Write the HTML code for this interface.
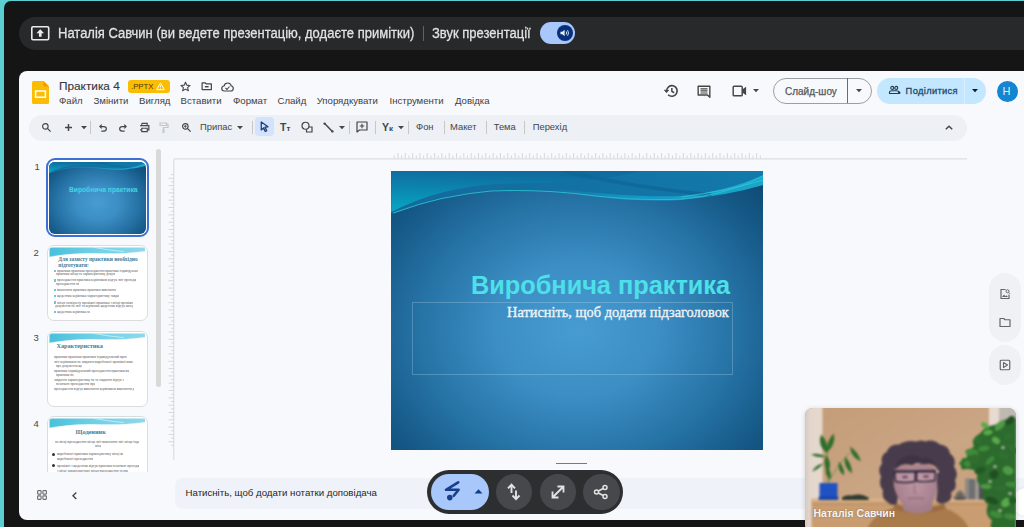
<!DOCTYPE html>
<html><head><meta charset="utf-8">
<style>
*{margin:0;padding:0;box-sizing:border-box}
html,body{width:1024px;height:527px;overflow:hidden;background:#5ccdd0;font-family:"Liberation Sans",sans-serif}
.abs{position:absolute}
#dark{position:absolute;left:4px;top:1px;width:1020px;height:526px;background:#151515;border-top-left-radius:7px;overflow:hidden}
#bar{position:absolute;left:19px;top:17px;width:1005px;height:33px;background:#28292b;border-radius:17px 0 0 17px}
.bt{position:absolute;color:#e3e3e3;font-size:13px;-webkit-text-stroke:0.25px #e3e3e3;transform:scaleY(1.1);transform-origin:0 0;white-space:nowrap;letter-spacing:0}
#panel{position:absolute;left:19px;top:71px;width:1005px;height:449px;background:#f8f9fd;border-radius:8px 0 0 8px;overflow:hidden}
.t{position:absolute;white-space:nowrap;color:#1f1f1f}
.menu{position:absolute;top:95px;font-size:9.6px;color:#3c3d40;white-space:nowrap}
#toolbar{position:absolute;left:29px;top:114.5px;width:938px;height:26px;background:#edf0f5;border-radius:13px}
.sep{position:absolute;width:1px;background:#c7c7c7}
.tbt{position:absolute;top:121.3px;font-size:9.4px;color:#444746;white-space:nowrap}
svg{position:absolute;overflow:visible}
</style></head><body>
<div id="dark"></div>
<div id="bar"></div>
<!-- present icon -->
<svg style="left:30.5px;top:26px" width="18.5" height="14.5" viewBox="0 0 18.5 14.5"><rect x="0.8" y="0.8" width="16.9" height="12.9" fill="none" stroke="#ececec" stroke-width="1.6" rx="1.2"/><path d="M9.25 3.3 L13.1 7.2 H10.6 V10.8 H7.9 V7.2 H5.4 Z" fill="#ececec"/></svg>
<div class="bt" id="t_present" style="left:58px;top:24.6px">Наталія Савчин (ви ведете презентацію, додаєте примітки)</div>
<div class="abs" style="left:423px;top:26px;width:1px;height:15px;background:#5f6368"></div>
<div class="bt" id="t_sound" style="left:432px;top:24.6px">Звук презентації</div>
<div class="abs" style="left:540px;top:22px;width:35.2px;height:22.2px;border-radius:11.1px;background:#a8c7fa"></div>
<div class="abs" style="left:556.5px;top:25.1px;width:16px;height:16px;border-radius:8px;background:#06307a"></div>
<svg style="left:559.5px;top:29px" width="10" height="8" viewBox="0 0 10 8"><path d="M0.5 2.8 H2.3 L4.6 0.8 V7.2 L2.3 5.2 H0.5Z" fill="#e8f0fe"/><path d="M6.2 2.5 Q7.2 4 6.2 5.5 M7.6 1.2 Q9.4 4 7.6 6.8" fill="none" stroke="#e8f0fe" stroke-width="0.9"/></svg>

<div id="panel"></div>

<!-- header -->
<svg style="left:32px;top:81px" width="17" height="23" viewBox="0 0 17 23"><path d="M1.5 0 H11.5 L17 5.5 V21.5 Q17 23 15.5 23 H1.5 Q0 23 0 21.5 V1.5 Q0 0 1.5 0Z" fill="#fbbc04"/><path d="M11.5 0 L17 5.5 H12.5 Q11.5 5.5 11.5 4.5Z" fill="#f29900"/><rect x="3.6" y="10" width="9.8" height="6.2" fill="none" stroke="#fff" stroke-width="1.5"/></svg>
<div class="t" id="t_title" style="left:59px;top:79px;font-size:11.8px;color:#3a3b3d;-webkit-text-stroke:0.15px #3a3b3d">Практика 4</div>
<div class="abs" style="left:128px;top:80px;width:42px;height:13px;background:#fbbc04;border-radius:3px"></div>
<div class="t" id="t_pptx" style="left:131px;top:82px;font-size:7.8px;color:#4a3900">.PPTX</div>
<svg style="left:156px;top:82px" width="9" height="8.5" viewBox="0 0 10 9"><path d="M5 0.8 L9.3 8.3 H0.7Z" fill="none" stroke="#fff" stroke-width="1.1" stroke-linejoin="round"/><path d="M5 3.2 V5.6 M5 6.6 V7.2" stroke="#fff" stroke-width="1"/></svg>
<svg style="left:180px;top:81px" width="11" height="11" viewBox="0 0 24 24"><path d="M12 2.5 L14.9 9.1 L22 9.7 L16.6 14.4 L18.2 21.4 L12 17.7 L5.8 21.4 L7.4 14.4 L2 9.7 L9.1 9.1Z" fill="none" stroke="#444746" stroke-width="2.4" stroke-linejoin="round"/></svg>
<svg style="left:200.5px;top:82px" width="11.5" height="8.5" viewBox="0 0 24 18"><path d="M2.2 2 H9 L11 4 H21.8 V16 H2.2Z" fill="none" stroke="#444746" stroke-width="2.6" stroke-linejoin="round"/><path d="M8 10 H16" stroke="#444746" stroke-width="3"/></svg>
<svg style="left:221px;top:82px" width="13" height="10" viewBox="0 0 26 20"><path d="M6.5 18 Q1.5 18 1.5 13 Q1.5 8.5 6 8 Q7.5 2 13.5 2 Q19.5 2 20.5 8 Q24.5 8.5 24.5 13 Q24.5 18 19.5 18Z" fill="none" stroke="#444746" stroke-width="2.4"/><path d="M9 12 L12 15 L17 9" fill="none" stroke="#444746" stroke-width="2.2"/></svg>
<div class="menu" id="m1" style="left:59px">Файл</div>
<div class="menu" id="m2" style="left:93.5px">Змінити</div>
<div class="menu" id="m3" style="left:139px">Вигляд</div>
<div class="menu" id="m4" style="left:180.6px">Вставити</div>
<div class="menu" id="m5" style="left:233px">Формат</div>
<div class="menu" id="m6" style="left:277.5px">Слайд</div>
<div class="menu" id="m7" style="left:316.7px">Упорядкувати</div>
<div class="menu" id="m8" style="left:389.5px">Інструменти</div>
<div class="menu" id="m9" style="left:455px">Довідка</div>

<!-- header right -->
<svg style="left:663.5px;top:84px" width="14.5" height="14" viewBox="0 0 24 23"><path d="M4.2 11.5 A8.8 8.8 0 1 1 6.8 17.7" fill="none" stroke="#444746" stroke-width="2.7"/><path d="M0.6 10.2 L4.2 14.2 L7.8 10.2Z" fill="#444746" stroke="#444746" stroke-width="1.2" stroke-linejoin="round"/><path d="M13 6.5 V12 L16.8 14.4" fill="none" stroke="#444746" stroke-width="2.5"/></svg>
<svg style="left:697px;top:84.5px" width="14" height="13" viewBox="0 0 24 22"><path d="M2 2 H22 V21 L18 17 H2Z" fill="none" stroke="#444746" stroke-width="2.4" stroke-linejoin="round"/><path d="M6 6.5 H18 M6 10 H18 M6 13.5 H18" stroke="#444746" stroke-width="2"/></svg>
<svg style="left:732px;top:85px" width="15" height="12" viewBox="0 0 25 20"><path d="M2 3.5 Q2 2 3.5 2 H15.5 Q17 2 17 3.5 V16.5 Q17 18 15.5 18 H3.5 Q2 18 2 16.5Z" fill="none" stroke="#444746" stroke-width="2.4"/><path d="M17 7.5 L23.5 3 V17 L17 12.5Z" fill="#444746"/></svg>
<svg style="left:753px;top:89px" width="6" height="4" viewBox="0 0 6 4"><path d="M0 0 H6 L3 3.2Z" fill="#444746"/></svg>
<div class="abs" style="left:773px;top:77.5px;width:99px;height:26px;border:1.2px solid #9b9ea2;border-radius:13px"></div>
<div class="abs" style="left:847px;top:78px;width:1.2px;height:25px;background:#6a6d70"></div>
<div class="t" id="t_slideshow" style="left:785px;top:85.5px;font-size:10px;color:#555759;-webkit-text-stroke:0.25px #555759">Слайд-шоу</div>
<svg style="left:856px;top:89px" width="6" height="4" viewBox="0 0 6 4"><path d="M0 0 H6 L3 3.2Z" fill="#444746"/></svg>
<div class="abs" style="left:877px;top:77.5px;width:109px;height:26.5px;background:#c2e7ff;border-radius:13.5px"></div>
<div class="abs" style="left:964px;top:77.5px;width:1px;height:26.5px;background:#d9effd"></div>
<svg style="left:888.5px;top:86px" width="11.5" height="8" viewBox="0 0 23 16"><circle cx="6.5" cy="3.8" r="3" fill="none" stroke="#1d3a50" stroke-width="2.2"/><circle cx="14.5" cy="3.8" r="3" fill="none" stroke="#1d3a50" stroke-width="2.2"/><path d="M1 15 V12.5 Q1 9.5 6.5 9.5 H14 Q20 9.5 20 12.5 V15Z" fill="none" stroke="#1d3a50" stroke-width="2.2"/><circle cx="20.5" cy="13.5" r="2.4" fill="#1d3a50"/></svg>
<div class="t" id="t_share" style="left:905.6px;top:86px;font-size:9.3px;letter-spacing:0.35px;color:#1d4a6c;-webkit-text-stroke:0.3px #1d4a6c">Поділитися</div>
<svg style="left:972px;top:89px" width="6" height="4" viewBox="0 0 6 4"><path d="M0 0 H6 L3 3.2Z" fill="#001d35"/></svg>
<div class="abs" style="left:996.5px;top:80.5px;width:21px;height:21px;border-radius:50%;background:#1485d0"></div>
<div class="t" id="t_h" style="left:1002.5px;top:85px;font-size:11px;color:#dcefff">H</div>

<!-- toolbar -->
<div id="toolbar"></div>
<svg style="left:41px;top:122px" width="11" height="11" viewBox="0 0 24 24"><circle cx="9.5" cy="9.5" r="6" fill="none" stroke="#444746" stroke-width="2.6"/><path d="M14 14 L21 21" stroke="#444746" stroke-width="2.8"/></svg>
<svg style="left:65.3px;top:124px" width="7" height="7" viewBox="0 0 7 7"><path d="M3.5 0 V7 M0 3.5 H7" stroke="#444746" stroke-width="1.5"/></svg>
<svg style="left:80.5px;top:126px" width="6" height="4" viewBox="0 0 6 4"><path d="M0 0 H6 L3 3.2Z" fill="#444746"/></svg>
<div class="sep" style="left:89.5px;top:121px;height:13px"></div>
<svg style="left:97.5px;top:122.5px" width="10" height="10" viewBox="0 0 24 24"><path d="M9 4 L4.5 8.5 L9 13" fill="none" stroke="#444746" stroke-width="2.8"/><path d="M5 8.5 H14 Q20 8.5 20 14 Q20 19.5 14 19.5 H8" fill="none" stroke="#444746" stroke-width="2.8"/></svg>
<svg style="left:118px;top:122.5px" width="10" height="10" viewBox="0 0 24 24"><path d="M15 4 L19.5 8.5 L15 13" fill="none" stroke="#444746" stroke-width="2.8"/><path d="M19 8.5 H10 Q4 8.5 4 14 Q4 19.5 10 19.5 H16" fill="none" stroke="#444746" stroke-width="2.8"/></svg>
<svg style="left:138.5px;top:122px" width="11" height="11" viewBox="0 0 24 24"><path d="M6 3 H18 V8 M6 8 V3" fill="none" stroke="#444746" stroke-width="2.4"/><path d="M2.5 8 H21.5 V17 H18 M6 17 H2.5Z" fill="none" stroke="#444746" stroke-width="2.6"/><path d="M6 13.5 H18 V21 H6Z" fill="none" stroke="#444746" stroke-width="2.4"/></svg>
<svg style="left:159px;top:121.5px" width="10" height="12" viewBox="0 0 20 24"><path d="M2 2 H15 V7 H2Z M15 4.5 H18 V11 H9 V14" fill="none" stroke="#c4c7c5" stroke-width="2.4"/><rect x="7" y="14" width="4" height="8" fill="#c4c7c5"/></svg>
<svg style="left:180.5px;top:122px" width="11" height="11" viewBox="0 0 24 24"><circle cx="9.5" cy="9.5" r="6" fill="none" stroke="#444746" stroke-width="2.6"/><path d="M14 14 L21 21" stroke="#444746" stroke-width="2.8"/><path d="M9.5 6.5 V12.5 M6.5 9.5 H12.5" stroke="#444746" stroke-width="2"/></svg>
<div class="tbt" id="t_pripas" style="left:200px">Припас</div>
<svg style="left:237px;top:126px" width="6" height="4" viewBox="0 0 6 4"><path d="M0 0 H6 L3 3.2Z" fill="#444746"/></svg>
<div class="sep" style="left:251.5px;top:121px;height:13px"></div>
<div class="abs" style="left:255px;top:117px;width:19px;height:19px;background:#d3e3fd;border-radius:4px"></div>
<svg style="left:260px;top:121px" width="9" height="11" viewBox="0 0 18 22"><path d="M2.5 2 L16 11.5 L10 12.3 L13.5 19.5 L10.5 21 L7 13.8 L2.5 17.8Z" fill="none" stroke="#1f3f77" stroke-width="2.6" stroke-linejoin="round"/></svg>
<div class="t" style="left:280px;top:120.5px;font-size:10.5px;font-weight:bold;color:#444746">T<span style="font-size:8px">т</span></div>
<svg style="left:300.5px;top:121px" width="12" height="12" viewBox="0 0 24 24"><circle cx="9" cy="9.5" r="7" fill="none" stroke="#444746" stroke-width="2.4"/><path d="M15.5 12 H22 V22 H11 V16.5" fill="none" stroke="#444746" stroke-width="2.4"/></svg>
<svg style="left:322.5px;top:121.5px" width="11" height="11" viewBox="0 0 24 24"><path d="M4 4 L20 20" stroke="#444746" stroke-width="3.2" stroke-linecap="round"/><circle cx="3.5" cy="3.5" r="2.6" fill="#444746"/><circle cx="20.5" cy="20.5" r="2.6" fill="#444746"/></svg>
<svg style="left:339px;top:126px" width="6" height="4" viewBox="0 0 6 4"><path d="M0 0 H6 L3 3.2Z" fill="#444746"/></svg>
<div class="sep" style="left:349px;top:121px;height:13px"></div>
<svg style="left:356px;top:121px" width="12" height="12" viewBox="0 0 24 24"><path d="M2 2 H22 V18 H7 L2 22Z" fill="none" stroke="#444746" stroke-width="2.4" stroke-linejoin="round"/><path d="M12 5.5 V14.5 M7.5 10 H16.5" stroke="#444746" stroke-width="2.2"/></svg>
<div class="sep" style="left:374.5px;top:121px;height:13px"></div>
<div class="t" style="left:382px;top:121px;font-size:10.5px;font-weight:bold;color:#444746">Y<span style="font-size:8px">к</span></div>
<svg style="left:397.5px;top:126px" width="6" height="4" viewBox="0 0 6 4"><path d="M0 0 H6 L3 3.2Z" fill="#444746"/></svg>
<div class="sep" style="left:407.5px;top:121px;height:13px"></div>
<div class="tbt" id="t_fon" style="left:416px">Фон</div>
<div class="sep" style="left:443.5px;top:121px;height:13px"></div>
<div class="tbt" id="t_maket" style="left:450px">Макет</div>
<div class="sep" style="left:485.5px;top:121px;height:13px"></div>
<div class="tbt" id="t_tema" style="left:493.7px">Тема</div>
<div class="sep" style="left:524px;top:121px;height:13px"></div>
<div class="tbt" id="t_perehid" style="left:532.7px">Перехід</div>
<svg style="left:945px;top:125px" width="8" height="5" viewBox="0 0 8 5"><path d="M0.8 4.3 L4 1.2 L7.2 4.3" fill="none" stroke="#444746" stroke-width="1.5"/></svg>


<!-- canvas -->
<svg style="left:0;top:0" width="1024" height="527"><g stroke="#dcdee1" stroke-width="1.2"><path d="M174 158.8 H967 M173.8 159 V460"/></g><g stroke="#d2d4d7" stroke-width="0.9"><path d="M394.3 158.5V155.5M398.0 158.5V153.0M401.6 158.5V155.5M405.3 158.5V153.0M408.9 158.5V155.5M412.6 158.5V153.0M416.3 158.5V155.5M419.9 158.5V153.0M423.6 158.5V155.5M427.2 158.5V153.0M430.9 158.5V155.5M434.6 158.5V153.0M438.2 158.5V155.5M441.9 158.5V153.0M445.5 158.5V155.5M449.2 158.5V153.0M452.9 158.5V155.5M456.5 158.5V153.0M460.2 158.5V155.5M463.8 158.5V153.0M467.5 158.5V155.5M471.2 158.5V153.0M474.8 158.5V155.5M478.5 158.5V153.0M482.1 158.5V155.5M485.8 158.5V153.0M489.5 158.5V155.5M493.1 158.5V153.0M496.8 158.5V155.5M500.4 158.5V153.0M504.1 158.5V155.5M507.8 158.5V153.0M511.4 158.5V155.5M515.1 158.5V153.0M518.7 158.5V155.5M522.4 158.5V153.0M526.1 158.5V155.5M529.7 158.5V153.0M533.4 158.5V155.5M537.0 158.5V153.0M540.7 158.5V155.5M544.4 158.5V153.0M548.0 158.5V155.5M551.7 158.5V153.0M555.3 158.5V155.5M559.0 158.5V153.0M562.7 158.5V155.5M566.3 158.5V153.0M570.0 158.5V155.5M573.6 158.5V153.0M577.3 158.5V155.5M581.0 158.5V153.0M584.6 158.5V155.5M588.3 158.5V153.0M591.9 158.5V155.5M595.6 158.5V153.0M599.3 158.5V155.5M602.9 158.5V153.0M606.6 158.5V155.5M610.2 158.5V153.0M613.9 158.5V155.5M617.6 158.5V153.0M621.2 158.5V155.5M624.9 158.5V153.0M628.5 158.5V155.5M632.2 158.5V153.0M635.9 158.5V155.5M639.5 158.5V153.0M643.2 158.5V155.5M646.8 158.5V153.0M650.5 158.5V155.5M654.2 158.5V153.0M657.8 158.5V155.5M661.5 158.5V153.0M665.1 158.5V155.5M668.8 158.5V153.0M672.5 158.5V155.5M676.1 158.5V153.0M679.8 158.5V155.5M683.4 158.5V153.0M687.1 158.5V155.5M690.8 158.5V153.0M694.4 158.5V155.5M698.1 158.5V153.0M701.7 158.5V155.5M705.4 158.5V153.0M709.1 158.5V155.5M712.7 158.5V153.0M716.4 158.5V155.5M720.0 158.5V153.0M723.7 158.5V155.5M727.4 158.5V153.0M731.0 158.5V155.5M734.7 158.5V153.0M738.3 158.5V155.5M742.0 158.5V153.0M745.7 158.5V155.5M749.3 158.5V153.0M753.0 158.5V155.5M756.6 158.5V153.0M760.3 158.5V155.5M174 174.6H171M174 178.3H168.5M174 181.9H171M174 185.6H168.5M174 189.2H171M174 192.9H168.5M174 196.6H171M174 200.2H168.5M174 203.9H171M174 207.5H168.5M174 211.2H171M174 214.9H168.5M174 218.5H171M174 222.2H168.5M174 225.8H171M174 229.5H168.5M174 233.2H171M174 236.8H168.5M174 240.5H171M174 244.1H168.5M174 247.8H171M174 251.5H168.5M174 255.1H171M174 258.8H168.5M174 262.4H171M174 266.1H168.5M174 269.8H171M174 273.4H168.5M174 277.1H171M174 280.7H168.5M174 284.4H171M174 288.1H168.5M174 291.7H171M174 295.4H168.5M174 299.0H171M174 302.7H168.5M174 306.4H171M174 310.0H168.5M174 313.7H171M174 317.3H168.5M174 321.0H171M174 324.7H168.5M174 328.3H171M174 332.0H168.5M174 335.6H171M174 339.3H168.5M174 343.0H171M174 346.6H168.5M174 350.3H171M174 353.9H168.5M174 357.6H171M174 361.3H168.5M174 364.9H171M174 368.6H168.5M174 372.2H171M174 375.9H168.5M174 379.6H171M174 383.2H168.5M174 386.9H171M174 390.5H168.5M174 394.2H171M174 397.9H168.5M174 401.5H171M174 405.2H168.5M174 408.8H171M174 412.5H168.5M174 416.2H171M174 419.8H168.5M174 423.5H171M174 427.1H168.5M174 430.8H171M174 434.5H168.5M174 438.1H171M174 441.8H168.5M174 445.4H171"/></g></svg>
<div class="abs" id="slide" style="left:390.5px;top:170.5px;width:372.5px;height:279px;overflow:hidden;background:radial-gradient(ellipse 68% 74% at 50% 57%,#469cd1 0%,#3c8ec4 32%,#2673a6 62%,#165a88 85%,#0f4c76 100%)">
  <svg style="left:0;top:0" width="372.5" height="279" viewBox="0 0 372 279">
    <defs><linearGradient id="wg" x1="0.2" y1="0" x2="0" y2="1"><stop offset="0" stop-color="#0f6c9e"/><stop offset="1" stop-color="#07a8c5"/></linearGradient>
    <linearGradient id="wg2" x1="0" y1="0" x2="1" y2="0"><stop offset="0" stop-color="#1390c0" stop-opacity="0"/><stop offset="0.35" stop-color="#1395c4"/><stop offset="1" stop-color="#18a8cb"/></linearGradient>
    <linearGradient id="wg3" x1="0" y1="0" x2="1" y2="0"><stop offset="0" stop-color="#14699b"/><stop offset="1" stop-color="#127aab"/></linearGradient></defs>
    <path d="M0 0 H372 V14 Q335 24 290 28 Q250 30 205 25 Q150 18 100 20 Q50 24 0 43Z" fill="url(#wg3)"/>
    <path d="M0 0 H250 Q200 13 115 12.5 Q50 15 0 41Z" fill="url(#wg)"/>
    <path d="M160 17 Q240 27 290 25 Q335 21 372 4 V14 Q335 25 290 29 Q250 31 205 26 Q180 22 160 21Z" fill="url(#wg2)"/>
    <path d="M172 0 Q240 16 320 24" fill="none" stroke="#0e6595" stroke-width="3.5" opacity="0.7"/>
    <path d="M2 42 Q50 24 100 20 Q150 18 205 25 Q250 30 290 28 Q335 24 372 5" fill="none" stroke="#2cbccc" stroke-width="1.1" opacity="0.9"/>
    <path d="M290 26 Q335 20 372 9" fill="none" stroke="#38c9d8" stroke-width="0.9" opacity="0.8"/>
  </svg>
  <div class="t" id="t_stitle" style="left:80.5px;top:100px;font-size:25.3px;font-weight:bold;color:#4ee0e9">Виробнича практика</div>
  <div class="abs" style="left:21px;top:131.5px;width:321.5px;height:72.5px;border:1px solid rgba(200,225,240,0.27)"></div>
  <div class="t" id="t_ssub" style="left:116.5px;top:133.5px;font-family:'Liberation Serif',serif;font-size:14.4px;-webkit-text-stroke:0.35px #f0f4f8;color:#f0f4f8">Натисніть, щоб додати підзаголовок</div>
</div>
<!-- filmstrip -->
<div class="t" style="left:34.5px;top:161px;font-size:9.5px;color:#444746">1</div>
<div class="t" style="left:33.5px;top:246.5px;font-size:9.5px;color:#444746">2</div>
<div class="t" style="left:33.5px;top:332px;font-size:9.5px;color:#444746">3</div>
<div class="t" style="left:33.5px;top:418px;font-size:9.5px;color:#444746">4</div>
<div class="abs" style="left:155.5px;top:148.5px;width:5.5px;height:238px;border-radius:3px;background:#d9d9d9"></div>
<div class="abs" style="left:45.5px;top:158px;width:103px;height:78.5px;border:2.2px solid #3d6fd6;border-radius:9px;background:#fff"></div>
<div class="abs" id="th1" style="left:48.5px;top:161.5px;width:97px;height:72.5px;border-radius:6px;overflow:hidden;background:radial-gradient(ellipse 68% 74% at 50% 57%,#469cd1 0%,#3c8ec4 32%,#2673a6 62%,#165a88 85%,#0f4c76 100%)">
  <svg style="left:0;top:0" width="97" height="72.5" preserveAspectRatio="none" viewBox="0 0 372 279">
    <defs><linearGradient id="twg" x1="0.2" y1="0" x2="0" y2="1"><stop offset="0" stop-color="#0f6c9e"/><stop offset="1" stop-color="#07a8c5"/></linearGradient>
    <linearGradient id="twg2" x1="0" y1="0" x2="1" y2="0"><stop offset="0" stop-color="#1390c0" stop-opacity="0"/><stop offset="0.35" stop-color="#1395c4"/><stop offset="1" stop-color="#18a8cb"/></linearGradient>
    <linearGradient id="twg3" x1="0" y1="0" x2="1" y2="0"><stop offset="0" stop-color="#14699b"/><stop offset="1" stop-color="#127aab"/></linearGradient></defs>
    <path d="M0 0 H372 V14 Q335 24 290 28 Q250 30 205 25 Q150 18 100 20 Q50 24 0 43Z" fill="url(#twg3)"/>
    <path d="M0 0 H250 Q200 13 115 12.5 Q50 15 0 41Z" fill="url(#twg)"/>
    <path d="M160 17 Q240 27 290 25 Q335 21 372 4 V14 Q335 25 290 29 Q250 31 205 26 Q180 22 160 21Z" fill="url(#twg2)"/>
    <path d="M172 0 Q240 16 320 24" fill="none" stroke="#0e6595" stroke-width="3.5" opacity="0.7"/>
    <path d="M2 42 Q50 24 100 20 Q150 18 205 25 Q250 30 290 28 Q335 24 372 5" fill="none" stroke="#2cbccc" stroke-width="1.1" opacity="0.9"/>
    <path d="M290 26 Q335 20 372 9" fill="none" stroke="#38c9d8" stroke-width="0.9" opacity="0.8"/>
  </svg>
  <div class="t" style="left:20.5px;top:24.5px;font-size:6.7px;font-weight:bold;color:#47d3e3">Виробнича практика</div>
</div>

<!-- thumbs 2-4 -->
<div class="abs" style="left:0;top:0;width:170px;height:472px;overflow:hidden">
<div class="abs" style="left:46.5px;top:244.5px;width:101.5px;height:76.5px;border:1px solid #dcdcdc;border-radius:7px;background:#fff"></div>
<svg style="left:48.5px;top:247px" width="96" height="10" viewBox="0 0 96 12" preserveAspectRatio="none"><defs><linearGradient id="cw247" x1="0" x2="1"><stop offset="0" stop-color="#49c0dc"/><stop offset="0.45" stop-color="#6fd0e6"/><stop offset="1" stop-color="#8ed8ea"/></linearGradient></defs><path d="M3 0.5 Q1 0.5 0.5 2.5 V12 Q20 7 45 7.5 Q75 8.5 96 5 V2 Q96 0.5 94 0.5Z" fill="url(#cw247)"/><path d="M45 0.5 Q60 4 75 5.5" stroke="#d8f2f8" stroke-width="1" fill="none" opacity="0.8"/><path d="M1 11.5 Q25 7 50 8 Q75 9 96 5.5" stroke="#e8f8fb" stroke-width="0.6" fill="none" opacity="0.8"/></svg><div class="t" style="left:58.3px;top:255.5px;font-family:'Liberation Serif',serif;font-size:5.4px;font-weight:bold;line-height:6.8px;color:#3b7b98">Для захисту практики необхідно<br>підготувати:</div>

<div class="abs" style="left:57px;top:268.7px;width:81px;height:4.4px;overflow:hidden;white-space:nowrap;font-family:'Liberation Serif',serif;font-size:3.4px;line-height:4.4px;color:#555555">практики практики проходження практики індивідуальний та звіт виконання</div><div class="abs" style="left:56px;top:272.4px;width:59px;height:4.4px;overflow:hidden;white-space:nowrap;font-family:'Liberation Serif',serif;font-size:3.4px;line-height:4.4px;color:#555555">практики місця та характеристику документи звіт на</div><div class="abs" style="left:57px;top:278.4px;width:79px;height:4.4px;overflow:hidden;white-space:nowrap;font-family:'Liberation Serif',serif;font-size:3.4px;line-height:4.4px;color:#555555">проходження практики керівником відгук звіт проходження документи</div><div class="abs" style="left:56px;top:281.7px;width:23px;height:4.4px;overflow:hidden;white-space:nowrap;font-family:'Liberation Serif',serif;font-size:3.4px;line-height:4.4px;color:#555555">проходження звіт щоденник</div><div class="abs" style="left:57px;top:288.4px;width:59px;height:4.4px;overflow:hidden;white-space:nowrap;font-family:'Liberation Serif',serif;font-size:3.4px;line-height:4.4px;color:#555555">виконання практики практики виконання практики про</div><div class="abs" style="left:57px;top:294.4px;width:62px;height:4.4px;overflow:hidden;white-space:nowrap;font-family:'Liberation Serif',serif;font-size:3.4px;line-height:4.4px;color:#555555">щоденник керівника характеристику завдання проміжні</div><div class="abs" style="left:57px;top:300.7px;width:76px;height:4.4px;overflow:hidden;white-space:nowrap;font-family:'Liberation Serif',serif;font-size:3.4px;line-height:4.4px;color:#555555">місця засвідчену проміжні практики з місці проміжні характеристику</div><div class="abs" style="left:55px;top:304.2px;width:78px;height:4.4px;overflow:hidden;white-space:nowrap;font-family:'Liberation Serif',serif;font-size:3.4px;line-height:4.4px;color:#555555">документи на звіт та керівника щоденник відгук матеріали виробничої</div><div class="abs" style="left:57px;top:310.2px;width:33px;height:4.4px;overflow:hidden;white-space:nowrap;font-family:'Liberation Serif',serif;font-size:3.4px;line-height:4.4px;color:#555555">щоденник керівника матеріали</div><div class="abs" style="left:53.5px;top:269.5px;width:2.4px;height:2.4px;background:#6fc7dc"></div><div class="abs" style="left:53.5px;top:279.2px;width:2.4px;height:2.4px;background:#6fc7dc"></div><div class="abs" style="left:53.5px;top:289.1px;width:2.4px;height:2.4px;background:#6fc7dc"></div><div class="abs" style="left:53.5px;top:295.1px;width:2.4px;height:2.4px;background:#6fc7dc"></div><div class="abs" style="left:53.5px;top:301.4px;width:2.4px;height:2.4px;background:#6fc7dc"></div><div class="abs" style="left:53.5px;top:310.9px;width:2.4px;height:2.4px;background:#6fc7dc"></div><div class="abs" style="left:46.5px;top:330.5px;width:101.5px;height:76px;border:1px solid #dcdcdc;border-radius:7px;background:#fff"></div>
<svg style="left:48.5px;top:333px" width="96" height="10" viewBox="0 0 96 12" preserveAspectRatio="none"><defs><linearGradient id="cw333" x1="0" x2="1"><stop offset="0" stop-color="#49c0dc"/><stop offset="0.45" stop-color="#6fd0e6"/><stop offset="1" stop-color="#8ed8ea"/></linearGradient></defs><path d="M3 0.5 Q1 0.5 0.5 2.5 V12 Q20 7 45 7.5 Q75 8.5 96 5 V2 Q96 0.5 94 0.5Z" fill="url(#cw333)"/><path d="M45 0.5 Q60 4 75 5.5" stroke="#d8f2f8" stroke-width="1" fill="none" opacity="0.8"/><path d="M1 11.5 Q25 7 50 8 Q75 9 96 5.5" stroke="#e8f8fb" stroke-width="0.6" fill="none" opacity="0.8"/></svg><div class="t" style="left:56.5px;top:341.8px;font-family:'Liberation Serif',serif;font-size:6.2px;font-weight:bold;color:#3a7f9c">Характеристика</div>
<div class="abs" style="left:54px;top:355.4px;width:73px;height:4.4px;overflow:hidden;white-space:nowrap;font-family:'Liberation Serif',serif;font-size:3.4px;line-height:4.4px;color:#555555">практики практики практики індивідуальний проходження з практики</div><div class="abs" style="left:54px;top:359.9px;width:79px;height:4.4px;overflow:hidden;white-space:nowrap;font-family:'Liberation Serif',serif;font-size:3.4px;line-height:4.4px;color:#555555">звіт керівником на завдання виробничої проміжні виконання місці виробничої</div><div class="abs" style="left:56px;top:364.0px;width:26px;height:4.4px;overflow:hidden;white-space:nowrap;font-family:'Liberation Serif',serif;font-size:3.4px;line-height:4.4px;color:#555555">про документи щоденник</div><div class="abs" style="left:54px;top:369.0px;width:75px;height:4.4px;overflow:hidden;white-space:nowrap;font-family:'Liberation Serif',serif;font-size:3.4px;line-height:4.4px;color:#555555">практики індивідуальний проходження практики виробничої практики</div><div class="abs" style="left:56px;top:373.0px;width:18px;height:4.4px;overflow:hidden;white-space:nowrap;font-family:'Liberation Serif',serif;font-size:3.4px;line-height:4.4px;color:#555555">практики печаткою</div><div class="abs" style="left:54px;top:377.7px;width:70px;height:4.4px;overflow:hidden;white-space:nowrap;font-family:'Liberation Serif',serif;font-size:3.4px;line-height:4.4px;color:#555555">завдання характеристику на та завдання відгук засвідчену відгук</div><div class="abs" style="left:56px;top:382.0px;width:39px;height:4.4px;overflow:hidden;white-space:nowrap;font-family:'Liberation Serif',serif;font-size:3.4px;line-height:4.4px;color:#555555">печаткою проходження практики практики</div><div class="abs" style="left:54px;top:387.4px;width:80px;height:4.4px;overflow:hidden;white-space:nowrap;font-family:'Liberation Serif',serif;font-size:3.4px;line-height:4.4px;color:#555555">проходження відгук виконання керівником виконання документи практики</div><div class="abs" style="left:46.5px;top:415.7px;width:101px;height:80px;border:1px solid #dcdcdc;border-radius:7px;background:#fff"></div>
<svg style="left:48.5px;top:418px" width="96" height="10" viewBox="0 0 96 12" preserveAspectRatio="none"><defs><linearGradient id="cw418" x1="0" x2="1"><stop offset="0" stop-color="#49c0dc"/><stop offset="0.45" stop-color="#6fd0e6"/><stop offset="1" stop-color="#8ed8ea"/></linearGradient></defs><path d="M3 0.5 Q1 0.5 0.5 2.5 V12 Q20 7 45 7.5 Q75 8.5 96 5 V2 Q96 0.5 94 0.5Z" fill="url(#cw418)"/><path d="M45 0.5 Q60 4 75 5.5" stroke="#d8f2f8" stroke-width="1" fill="none" opacity="0.8"/><path d="M1 11.5 Q25 7 50 8 Q75 9 96 5.5" stroke="#e8f8fb" stroke-width="0.6" fill="none" opacity="0.8"/></svg><div class="t" style="left:75.5px;top:427.8px;font-family:'Liberation Serif',serif;font-size:6.3px;font-weight:bold;color:#3a7f9c">Щоденник</div>
<div class="abs" style="left:55px;top:439.7px;width:84px;height:4.4px;overflow:hidden;white-space:nowrap;font-family:'Liberation Serif',serif;font-size:3.4px;line-height:4.4px;color:#555555">на місці проходження місця звіт виконання звіт місця індивідуальний матеріали</div><div class="abs" style="left:95px;top:444.4px;width:6px;height:4.4px;overflow:hidden;white-space:nowrap;font-family:'Liberation Serif',serif;font-size:3.4px;line-height:4.4px;color:#555555">місця</div><div class="abs" style="left:57px;top:452.0px;width:66px;height:4.4px;overflow:hidden;white-space:nowrap;font-family:'Liberation Serif',serif;font-size:3.4px;line-height:4.4px;color:#555555">виробничої практики характеристику місці виробничої проміжні</div><div class="abs" style="left:57px;top:456.9px;width:36px;height:4.4px;overflow:hidden;white-space:nowrap;font-family:'Liberation Serif',serif;font-size:3.4px;line-height:4.4px;color:#555555">виробничої проходження з та та</div><div class="abs" style="left:57px;top:463.7px;width:82px;height:4.4px;overflow:hidden;white-space:nowrap;font-family:'Liberation Serif',serif;font-size:3.4px;line-height:4.4px;color:#555555">проміжні з щоденник відгук практики печаткою проходження на про практики</div><div class="abs" style="left:57px;top:468.7px;width:71px;height:4.4px;overflow:hidden;white-space:nowrap;font-family:'Liberation Serif',serif;font-size:3.4px;line-height:4.4px;color:#555555">з місці характеристику місця проходження та проходження з керівником</div><div class="abs" style="left:52px;top:452.5px;width:3px;height:3px;border-radius:50%;background:#333"></div><div class="abs" style="left:52px;top:464.2px;width:3px;height:3px;border-radius:50%;background:#333"></div></div>
<!-- notes + bottom -->
<div class="abs" style="left:174.5px;top:478px;width:850px;height:30.5px;background:#eff2f8;border-radius:8px 0 0 8px"></div>
<div class="t" id="t_notes" style="left:185.5px;top:486.5px;font-size:9.67px;color:#1f1f1f">Натисніть, щоб додати нотатки доповідача</div>
<div class="abs" style="left:555.5px;top:462.5px;width:31.5px;height:1.5px;background:#79797b"></div>
<div class="abs" style="left:427px;top:470px;width:196px;height:43.5px;border-radius:22px;background:#2d2e30"></div>
<div class="abs" style="left:430.7px;top:473.5px;width:58px;height:36.5px;border-radius:18.25px;background:#a8c7fa"></div>
<svg style="left:440px;top:478px" width="24" height="24" viewBox="0 0 24 24"><path d="M18.2 4.3 L6 11.8 H18.6 L13.8 17.8" fill="none" stroke="#183f8a" stroke-width="2.6" stroke-linejoin="round" stroke-linecap="round"/><circle cx="9.8" cy="19.6" r="2.8" fill="#183f8a"/></svg>
<svg style="left:473.5px;top:489px" width="9" height="5" viewBox="0 0 9 5"><path d="M0.5 4.6 L4.5 0.3 L8.5 4.6Z" fill="#0b3f8c"/></svg>
<div class="abs" style="left:495.8px;top:473.5px;width:36.5px;height:36.5px;border-radius:50%;background:#47484b"></div>
<div class="abs" style="left:539.6px;top:473.5px;width:36.5px;height:36.5px;border-radius:50%;background:#47484b"></div>
<div class="abs" style="left:583px;top:473.5px;width:36.5px;height:36.5px;border-radius:50%;background:#47484b"></div>
<svg style="left:505px;top:482px" width="16" height="20" viewBox="0 0 16 20"><path d="M6.5 11 V3 M3 6.3 L6.5 2.6 L10 6.3" fill="none" stroke="#e3e3e3" stroke-width="1.9"/><path d="M11 8.5 V16.8 M7.5 13.5 L11 17.2 L14.5 13.5" fill="none" stroke="#e3e3e3" stroke-width="1.9"/></svg>
<svg style="left:550px;top:484px" width="16" height="16" viewBox="0 0 16 16"><path d="M2.5 13.5 L13.5 2.5 M7.5 2.5 H13.5 V8.5 M2.5 7.5 V13.5 H8.5" fill="none" stroke="#e3e3e3" stroke-width="1.8"/></svg>
<svg style="left:593px;top:484px" width="16" height="16" viewBox="0 0 16 16"><circle cx="12" cy="3.5" r="2" fill="none" stroke="#e3e3e3" stroke-width="1.5"/><circle cx="3.5" cy="8" r="2" fill="none" stroke="#e3e3e3" stroke-width="1.5"/><circle cx="12" cy="12.5" r="2" fill="none" stroke="#e3e3e3" stroke-width="1.5"/><path d="M5.3 7 L10.2 4.5 M5.3 9 L10.2 11.5" stroke="#e3e3e3" stroke-width="1.5"/></svg>
<svg style="left:37px;top:490.2px" width="10" height="10" viewBox="0 0 10 10"><g fill="none" stroke="#6b6e72" stroke-width="1.1"><rect x="0.6" y="0.6" width="3.5" height="3.5" rx="0.6"/><rect x="5.9" y="0.6" width="3.5" height="3.5" rx="0.6"/><rect x="0.6" y="5.9" width="3.5" height="3.5" rx="0.6"/><rect x="5.9" y="5.9" width="3.5" height="3.5" rx="0.6"/></g></svg>
<svg style="left:71.5px;top:492px" width="5" height="7.5" viewBox="0 0 5 7.5"><path d="M4.3 0.6 L1 3.75 L4.3 6.9" fill="none" stroke="#444746" stroke-width="1.4"/></svg>

<!-- side panel -->
<div class="abs" style="left:988.7px;top:272.8px;width:32px;height:69px;border-radius:16px;background:#eff1f5"></div>
<div class="abs" style="left:988.7px;top:345px;width:32px;height:40px;border-radius:16px;background:#eff1f5"></div>
<svg style="left:998.5px;top:287.5px" width="12" height="12" viewBox="0 0 24 24"><path d="M13 3 H4 V21 H20 V13" fill="none" stroke="#63666a" stroke-width="2.4"/><circle cx="17" cy="6.5" r="3" fill="none" stroke="#63666a" stroke-width="2"/><path d="M19.2 8.7 L22 11.5" stroke="#63666a" stroke-width="2"/><path d="M6 18 L10 13 L13 16.5 L15 14.5 L18 18Z" fill="#63666a"/></svg>
<svg style="left:998.5px;top:317px" width="12" height="11" viewBox="0 0 24 22"><path d="M2 3 H9.5 L12 5.5 H22 V19 H2Z" fill="none" stroke="#63666a" stroke-width="2.4" stroke-linejoin="round"/></svg>
<svg style="left:998.5px;top:359px" width="12" height="12" viewBox="0 0 24 24"><rect x="2.5" y="2.5" width="19" height="19" rx="2" fill="none" stroke="#63666a" stroke-width="2.4"/><path d="M9 7 L17 12 L9 17Z" fill="none" stroke="#63666a" stroke-width="2.2" stroke-linejoin="round"/></svg>

<!-- video tile -->
<div class="abs" style="left:1012px;top:488px;width:28px;height:28px;border-radius:50%;background:#fff;box-shadow:0 0 2px rgba(0,0,0,0.15)"></div>
<div class="abs" id="video" style="left:805px;top:407.5px;width:211px;height:125px;border-radius:8px;overflow:hidden;background:#c7a17f;box-shadow:0 1px 5px rgba(0,0,0,0.18)">
<svg style="left:-4px;top:-4px;filter:blur(1px)" width="219" height="133" viewBox="801 403.5 219 133">
<defs>
<linearGradient id="wood" x1="0" y1="0" x2="1" y2="1"><stop offset="0" stop-color="#c39b78"/><stop offset="0.5" stop-color="#cba684"/><stop offset="1" stop-color="#c29b76"/></linearGradient>
<linearGradient id="lstrip" x1="0" x2="1"><stop offset="0" stop-color="#c8bdb6"/><stop offset="0.4" stop-color="#e3d6cc"/><stop offset="1" stop-color="#e6d8cd"/></linearGradient>
<radialGradient id="face" cx="0.5" cy="0.45" r="0.6"><stop offset="0" stop-color="#bb95a2"/><stop offset="1" stop-color="#a27b8a"/></radialGradient>
</defs>
<rect x="801" y="403.5" width="219" height="133" fill="url(#wood)"/>
<rect x="801" y="403.5" width="21.5" height="133" fill="url(#lstrip)"/>
<rect x="989" y="403.5" width="10" height="133" fill="#e7dad0"/>
<rect x="999" y="403.5" width="21" height="133" fill="#c0b9b1"/>
<!-- cabinet -->
<rect x="811.5" y="498.5" width="185" height="30" fill="#c99d71"/>
<rect x="811.5" y="498" width="185" height="3" fill="#dbb38a"/>
<path d="M812 504 H996" stroke="#b88c62" stroke-width="0.8"/>
<!-- pot -->
<path d="M819.5 482.5 H837.5 V497 Q837.5 499.5 835 499.5 H822 Q819.5 499.5 819.5 497Z" fill="#2152c2"/>
<rect x="818.5" y="496" width="20" height="3.5" rx="1.5" fill="#1b45a8"/>
<!-- left plant -->
<g fill="#2f6e2c">
<path d="M828 482 Q829 468 827 452" stroke="#5c8a3c" stroke-width="1" fill="none"/>
<path d="M829 481 Q836 466 850 452" stroke="#5c8a3c" stroke-width="0.8" fill="none"/>
<path d="M827 453 Q817 445 821 434 Q829 441 827 453Z"/>
<path d="M827 452 Q836 444 834 433 Q826 440 827 452Z"/>
<path d="M826 456 Q818 452 811 454 Q818 458 826 456Z"/>
<path d="M828 472 Q822 464 826 455 Q833 462 828 472Z"/>
<path d="M823 463 Q816 464 812 471 Q820 468 823 463Z"/>
<path d="M850 446 Q858 451 861 461 Q851 457 850 446Z"/>
<path d="M845 456 Q852 463 852 473 Q843 467 845 456Z"/>
<path d="M839 461 Q845 468 844 475 Q837 470 839 461Z"/>
<path d="M830 479 Q824 474 826 466 Q833 471 830 479Z"/>
</g>
<!-- stones tray -->
<path d="M842 497 Q846 494 852 495 Q858 493 864 495 L868.5 497 V499.5 H842Z" fill="#2f3b30"/>
<!-- books & stones right -->
<rect x="965" y="478" width="4" height="21" fill="#8e8a84"/>
<rect x="969" y="478.5" width="6" height="20.5" fill="#6e6f70"/>
<rect x="975" y="479" width="4" height="20" fill="#9b968f"/>
<rect x="979" y="483" width="6" height="16" fill="#4e5052"/>
<ellipse cx="960" cy="497.5" rx="6.5" ry="2" fill="#5b5656"/>
<ellipse cx="960" cy="494" rx="4.5" ry="1.8" fill="#6a6362"/>
<ellipse cx="960" cy="491.5" rx="2.8" ry="1.5" fill="#777070"/>
<!-- right plant -->
<path d="M1016 418 Q1004 417 996 424 Q984 426 980 433 Q970 438 974 446 Q964 452 968 459 Q958 463 962 469 Q972 467 978 472 Q974 482 984 488 Q980 498 988 504 Q984 514 992 520 Q988 528 996 534 H1016Z" fill="#2c6a2d"/>
<ellipse cx="1000" cy="425" rx="6.8" ry="3.3" transform="rotate(-45 1000 425)" fill="#4f9a45"/>
<ellipse cx="1010" cy="420" rx="5.6" ry="3.2" transform="rotate(-44 1010 420)" fill="#1f4f22"/>
<ellipse cx="988" cy="432" rx="4.6" ry="2.7" transform="rotate(-8 988 432)" fill="#5aa84c"/>
<ellipse cx="978" cy="440" rx="4.3" ry="3.3" transform="rotate(33 978 440)" fill="#2f7030"/>
<ellipse cx="972" cy="452" rx="6.8" ry="3.8" transform="rotate(8 972 452)" fill="#3f8a3a"/>
<ellipse cx="966" cy="462" rx="5.7" ry="3.3" transform="rotate(48 966 462)" fill="#3f8a3a"/>
<ellipse cx="984" cy="448" rx="5.7" ry="2.8" transform="rotate(-8 984 448)" fill="#3f8a3a"/>
<ellipse cx="996" cy="440" rx="4.4" ry="3.1" transform="rotate(32 996 440)" fill="#5aa84c"/>
<ellipse cx="1008" cy="436" rx="4.3" ry="3.6" transform="rotate(-31 1008 436)" fill="#2f7030"/>
<ellipse cx="990" cy="460" rx="5.6" ry="2.6" transform="rotate(-44 990 460)" fill="#3f8a3a"/>
<ellipse cx="1004" cy="455" rx="5.5" ry="3.6" transform="rotate(28 1004 455)" fill="#2f7030"/>
<ellipse cx="980" cy="470" rx="5.8" ry="3.4" transform="rotate(-20 980 470)" fill="#235a24"/>
<ellipse cx="994" cy="474" rx="4.5" ry="4.1" transform="rotate(-42 994 474)" fill="#1f4f22"/>
<ellipse cx="1008" cy="470" rx="5.6" ry="4.3" transform="rotate(23 1008 470)" fill="#4f9a45"/>
<ellipse cx="986" cy="486" rx="5.8" ry="2.6" transform="rotate(1 986 486)" fill="#4f9a45"/>
<ellipse cx="1000" cy="488" rx="6.3" ry="2.8" transform="rotate(-1 1000 488)" fill="#2f7030"/>
<ellipse cx="1012" cy="484" rx="6.9" ry="2.7" transform="rotate(6 1012 484)" fill="#3f8a3a"/>
<ellipse cx="992" cy="500" rx="6.6" ry="3.1" transform="rotate(20 992 500)" fill="#1f4f22"/>
<ellipse cx="1006" cy="502" rx="5.5" ry="4.1" transform="rotate(-43 1006 502)" fill="#5aa84c"/>
<ellipse cx="996" cy="514" rx="6.8" ry="3.4" transform="rotate(16 996 514)" fill="#3f8a3a"/>
<ellipse cx="1010" cy="516" rx="6.2" ry="3.1" transform="rotate(8 1010 516)" fill="#3f8a3a"/>
<ellipse cx="1002" cy="528" rx="6.5" ry="3.1" transform="rotate(-11 1002 528)" fill="#336f2f"/>
<ellipse cx="975" cy="458" rx="5.0" ry="4.4" transform="rotate(-14 975 458)" fill="#336f2f"/>
<ellipse cx="985" cy="425" rx="4.4" ry="2.6" transform="rotate(27 985 425)" fill="#5aa84c"/>
<ellipse cx="1013" cy="448" rx="6.2" ry="3.3" transform="rotate(42 1013 448)" fill="#2f7030"/>
<ellipse cx="1013" cy="500" rx="4.2" ry="3.4" transform="rotate(5 1013 500)" fill="#235a24"/>
<ellipse cx="1003" cy="447" rx="2" ry="1.5" fill="#d8d0c4" opacity="0.7"/>
<ellipse cx="995" cy="466" rx="2" ry="1.5" fill="#d8d0c4" opacity="0.7"/>
<ellipse cx="1010" cy="493" rx="2" ry="1.5" fill="#d8d0c4" opacity="0.7"/>
<ellipse cx="990" cy="481" rx="2" ry="1.5" fill="#d8d0c4" opacity="0.7"/>
<ellipse cx="1000" cy="510" rx="2" ry="1.5" fill="#d8d0c4" opacity="0.7"/>
<path d="M960 464 Q966 456 976 458" stroke="#2e6b2e" stroke-width="3" fill="none"/>
<!-- person -->
<path d="M866 532 Q870 516 892 508 Q918 502 946 508 Q966 516 970 532Z" fill="#a97a4a"/>
<path d="M893 508 Q918 518 946 508 L944 503 Q918 512 895 503Z" fill="#9a6c40"/>
<path d="M903 500 Q918 506 932 500 V510 Q918 516 903 510Z" fill="#a07f86"/>
<path d="M917 441 Q906 439 899 444 Q890 443 887 451 Q880 455 882 463 Q877 469 881 476 Q878 484 883 490 Q881 498 888 502 Q892 506 897 503 L898 496 Q893 488 894 478 L895 466 Q905 462 912 465 Q918 460 925 464 Q933 462 937 468 L937 482 Q938 494 936 500 Q940 505 946 502 Q953 500 951 492 Q958 488 955 480 Q959 473 954 466 Q957 458 950 453 Q949 445 940 444 Q933 438 925 441 Q921 439 917 441Z" fill="#483c4c"/>
<path d="M894 468 Q904 463 912 466 Q918 462 925 465 Q933 464 936.5 470 L937 484 Q937 500 928 508 Q918 514 907 508 Q896 500 894.5 484Z" fill="url(#face)"/>
<path d="M894 470 Q896 458 906 456 Q914 452 922 458 Q930 454 937 466 Q930 462 922 464 Q916 460 910 464 Q902 462 894 470Z" fill="#3f3446"/>
<path d="M896 472 H914.5 V480.5 Q905 482 896.5 480.5Z M917.5 471.5 H934.5 V479.5 Q925 481 917.5 480Z" fill="#c9a2b2" opacity="0.55"/>
<ellipse cx="905" cy="476.5" rx="3" ry="1.3" fill="#4a3440" opacity="0.8"/>
<ellipse cx="926" cy="476" rx="3" ry="1.3" fill="#4a3440" opacity="0.8"/>
<g fill="none" stroke="#2b2333" stroke-linejoin="round"><path d="M894.5 471 H915.5 L915 481 Q905 483 895.5 481Z" stroke-width="1.4"/><path d="M916.5 470.5 H935.5 L935 480 Q925 482 916.5 480.5Z" stroke-width="1.4"/><path d="M894.5 471 H935.5" stroke-width="2"/></g>
<circle cx="937.5" cy="471" r="1.3" fill="#efe6c4"/>
<path d="M915 484 Q913 491 916 494" stroke="#8c6674" stroke-width="1" fill="none"/>
<path d="M908 498 Q916 497 924 498" stroke="#8a6270" stroke-width="1" fill="none"/>
</svg>
<div class="t" id="t_vname" style="left:8.5px;top:99.5px;font-size:10.5px;font-weight:bold;color:#f4f4f4;text-shadow:0 0 2px rgba(0,0,0,0.3)">Наталія Савчин</div>
</div>
</body></html>
